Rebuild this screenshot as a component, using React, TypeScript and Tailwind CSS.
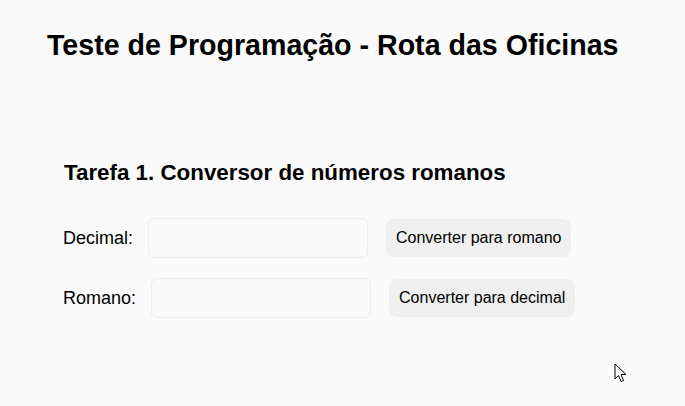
import React from "react";

export default function App() {
  return (
    <div className="relative min-h-screen w-full bg-[#fafafa] text-black" style={{ fontFamily: '"Liberation Sans", Arial, sans-serif' }}>
      <div className="pt-[27px] pl-[47px]">
        <h1 className="text-[28.6px] leading-[36px] font-bold">Teste de Programação - Rota das Oficinas</h1>
      </div>
      <div className="pl-[63px] pt-[96px]">
        <h2 className="pl-[1px] text-[22.35px] leading-[28px] font-bold">Tarefa 1. Conversor de números romanos</h2>
        <div className="mt-[31px] flex flex-col gap-[20px]">
          <div className="flex items-center">
            <label className="text-[18px] mr-[15px]">Decimal:</label>
            <input className="w-[220px] h-[40px] rounded-[6px] border border-[#ececec] bg-[#fafafa] outline-none" />
            <button className="ml-[18px] h-[38px] px-[10px] rounded-[8px] bg-[#efefef] text-[16px]">Converter para romano</button>
          </div>
          <div className="flex items-center">
            <label className="text-[18px] mr-[15px]">Romano:</label>
            <input className="w-[220px] h-[40px] rounded-[6px] border border-[#ececec] bg-[#fafafa] outline-none" />
            <button className="ml-[18px] h-[38px] px-[10px] rounded-[8px] bg-[#efefef] text-[16px]">Converter para decimal</button>
          </div>
        </div>
      </div>
      <svg className="absolute left-[614px] top-[363px]" width="14" height="20" viewBox="0 0 14 20">
        <path d="M1 1 L1 16 L4.5 12.5 L7 18.5 L9.5 17.5 L7 11.5 L12 11.5 Z" fill="white" stroke="black" strokeWidth="1" strokeLinejoin="miter" />
      </svg>
    </div>
  );
}
